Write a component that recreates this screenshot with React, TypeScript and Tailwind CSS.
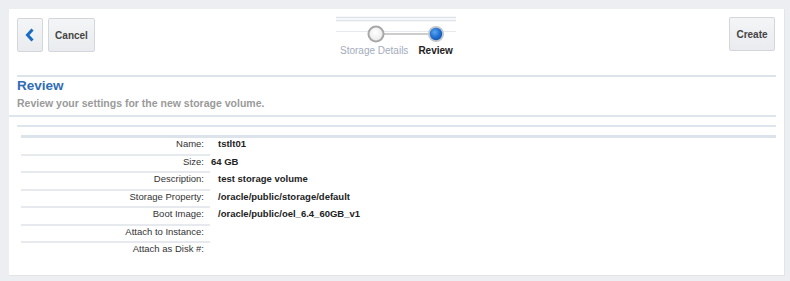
import React from "react";

const rows: { label: string; value: string; h: string; shift?: boolean }[] = [
  { label: "Name:", value: "tstlt01", h: "h-[16px]" },
  { label: "Size:", value: "64 GB", h: "h-[15px]", shift: true },
  { label: "Description:", value: "test storage volume", h: "h-[16px]" },
  { label: "Storage Property:", value: "/oracle/public/storage/default", h: "h-[15px]" },
  { label: "Boot Image:", value: "/oracle/public/oel_6.4_60GB_v1", h: "h-[16px]" },
  { label: "Attach to Instance:", value: "", h: "h-[15px]" },
  { label: "Attach as Disk #:", value: "", h: "h-[16px]" },
];

function Stepper() {
  return (
    <div className="w-[120px] flex flex-col">
      <svg width="120" height="29" viewBox="0 0 120 29" className="block">
        <defs>
          <radialGradient id="blue" cx="40%" cy="35%" r="70%">
            <stop offset="0%" stopColor="#5aa6f0" />
            <stop offset="60%" stopColor="#1f6fd2" />
            <stop offset="100%" stopColor="#1458b0" />
          </radialGradient>
          <radialGradient id="white" cx="45%" cy="40%" r="70%">
            <stop offset="0%" stopColor="#ffffff" />
            <stop offset="100%" stopColor="#e6e6e6" />
          </radialGradient>
        </defs>
        <line x1="0" y1="1.5" x2="120" y2="1.5" stroke="#dde2e8" strokeWidth="1.5" />
        <line x1="0" y1="4.5" x2="120" y2="4.5" stroke="#dde2e8" strokeWidth="1.5" />
        <line x1="0" y1="15.5" x2="120" y2="15.5" stroke="#e6e9ed" strokeWidth="1" />
        <line x1="48" y1="18" x2="92" y2="18" stroke="#9a9a9a" strokeWidth="1.2" />
        <circle cx="40" cy="18" r="7.5" fill="url(#white)" stroke="#a8a8a8" strokeWidth="2" />
        <circle cx="100" cy="18" r="8" fill="#c4c8cc" />
        <circle cx="100" cy="18" r="6.2" fill="url(#blue)" />
      </svg>
      <div className="flex gap-[10px] pl-[4px] text-[10px] leading-[12px] [font-family:'Liberation_Sans',Arial,sans-serif]">
        <span className="text-[#a3abbb]">Storage Details</span>
        <span className="text-[#222] font-bold">Review</span>
      </div>
    </div>
  );
}

export default function App() {
  return (
    <div className="w-[790px] h-[281px] bg-[#eceef1] pt-[9px] pl-[9px] overflow-hidden [font-family:'Liberation_Sans',Arial,sans-serif]">
      <div className="w-[776px] h-[267px] bg-white border-b border-r border-[#e2e5e8] flex flex-col">
        {/* header */}
        <div className="h-[66px] pl-[8px] pr-[9px] grid grid-cols-[1fr_auto_1fr] items-start">
          <div className="flex gap-[5px] pt-[9px]">
            <button className="w-[26px] h-[34px] rounded-[2px] border border-[#d3d7dc] bg-gradient-to-b from-[#f4f5f7] to-[#e9ebee] flex items-center justify-center">
              <svg width="10" height="14" viewBox="0 0 10 14">
                <path d="M7.5 1.5 L2.5 7 L7.5 12.5" fill="none" stroke="#1a6cc0" strokeWidth="3" strokeLinejoin="miter" />
              </svg>
            </button>
            <button className="w-[47px] h-[34px] rounded-[2px] border border-[#d3d7dc] bg-gradient-to-b from-[#f4f5f7] to-[#e9ebee] text-[10px] font-bold text-[#444]">
              Cancel
            </button>
          </div>
          <div className="pt-[7px]">
            <Stepper />
          </div>
          <div className="flex justify-end pt-[8px]">
            <button className="w-[46px] h-[34px] rounded-[2px] border border-[#d3d7dc] bg-gradient-to-b from-[#f4f5f7] to-[#e9ebee] text-[10px] font-bold text-[#444]">
              Create
            </button>
          </div>
        </div>
        <div className="ml-[8px] mr-[8px] h-[2px] bg-[#dde3eb]" />
        {/* title */}
        <div className="pl-[8px] pt-[0px] h-[38px]">
          <div className="text-[13.5px] leading-[17px] font-bold text-[#2f6db5]">Review</div>
          <div className="text-[10.5px] leading-[14px] mt-[2px] font-bold text-[#9a9a9a]">
            Review your settings for the new storage volume.
          </div>
        </div>
        <div className="mr-[8px] h-[1.5px] bg-[#dfe5ec]" />
        <div className="ml-[8px] mr-[8px] mt-[8.5px] h-[1.5px] bg-[#dfe5ec]" />
        <div className="ml-[12px] mr-[8px] mt-[8.5px] h-[3px] bg-[#dde3ea]" />
        {/* rows */}
        <div className="ml-[12px] flex flex-col text-[9.5px] leading-[11px]">
          {rows.map((r, i) => (
            <div key={r.label} className="flex flex-col">
              <div className={`flex items-start ${r.h}`}>
                <div className="w-[189px] text-right pr-[6px] text-[#333]">{r.label}</div>
                <div className={`font-bold text-[#222] ${r.shift ? "pl-[1px]" : "pl-[8px]"}`}>{r.value}</div>
              </div>
              {i < rows.length - 1 && <div className="w-[189px] h-[2px] bg-[#e6e9ee]" />}
            </div>
          ))}
        </div>
      </div>
    </div>
  );
}
